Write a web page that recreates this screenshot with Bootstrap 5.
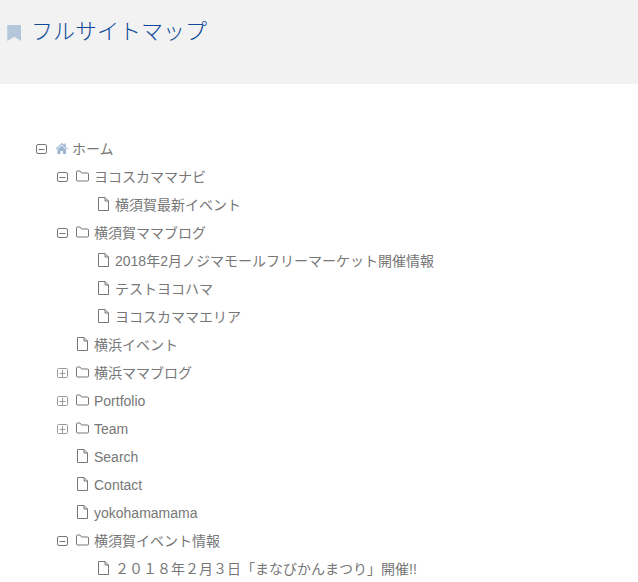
<!DOCTYPE html>
<html lang="ja">

<head>
    <meta charset="UTF-8">
    <title>フルサイトマップ</title>
    <link href="https://cdn.jsdelivr.net/npm/bootstrap@5.3.3/dist/css/bootstrap.min.css" rel="stylesheet">
    <style>
        body {
            font-family: "Liberation Sans", "Noto Sans CJK JP", sans-serif;
            font-size: 14px;
            color: #777;
            background: #fff;
        }

        .page-head {
            background: #f2f2f2;
            height: 84px;
            padding: 19px 0 0 7px;
        }

        .page-head h1 {
            font-family: "Liberation Sans", "Noto Sans CJK JP", sans-serif;
            font-size: 22px;
            font-weight: 300;
            line-height: 26px;
            color: #0e4a98;
            margin: 0;
        }

        .page-head svg {
            margin: 6px 10px 0 0;
        }

        .site-tree {
            padding: 50px 0 0 35px;
        }

        .site-tree ul {
            list-style: none;
            margin: 0;
            padding: 0 0 0 21px;
        }

        .site-tree > ul {
            padding-left: 0;
        }

        .tree-row {
            height: 28px;
            white-space: nowrap;
        }

        .tree-row a {
            color: #777;
            text-decoration: none;
            padding-top: 2px;
        }

        .tree-toggle {
            width: 12px;
            height: 12px;
            flex: none;
            margin-right: 8px;
            color: #777;
        }

        .tree-toggle.is-closed {
            color: #979c97;
        }

        .tree-gap {
            width: 20px;
            flex: none;
        }

        .tree-icon {
            width: 14px;
            height: 14px;
            flex: none;
            margin-right: 4px;
            color: #777;
        }
    </style>
</head>

<body>
    <svg width="0" height="0" class="d-block">
        <symbol id="i-minus" viewBox="0 0 12 12">
            <rect x="1.500" y="2.500" width="10" height="9" rx="1.500" fill="none" stroke="currentColor" />
            <path d="M3.500 7.500h6" stroke="currentColor" />
        </symbol>
        <symbol id="i-plus" viewBox="0 0 12 12">
            <rect x="1.500" y="2.500" width="10" height="9" rx="1" fill="none" stroke="currentColor" />
            <path d="M3.500 7.500h6M6.500 4v7" stroke="currentColor" />
        </symbol>
        <symbol id="i-folder" viewBox="0 0 14 14">
            <path d="M.5 11V3q0-1 1-1h2.500l1.500 2h6q1 0 1 1v6q0 1-1 1H1.500q-1 0-1-1z" fill="none" stroke="currentColor" />
        </symbol>
        <symbol id="i-file" viewBox="0 0 14 14">
            <path d="M1.500 .5H8l3.500 3.500v9.500h-10zM8 .5V4h3.500" fill="none" stroke="currentColor" />
        </symbol>
    </svg>

    <header class="page-head d-flex align-items-start">
        <svg width="14" height="16" viewBox="0 0 14 16">
            <path d="M.3 0H14v16l-6.800-4.200L.3 16z" fill="#b3c6da" />
        </svg>
        <h1>フルサイトマップ</h1>
    </header>

    <nav class="site-tree">
        <ul>
            <li>
                <div class="tree-row d-flex align-items-center">
                    <svg class="tree-toggle"><use href="#i-minus" /></svg>
                    <svg class="me-1" width="13" height="12" viewBox="0 0 13 12">
                        <path d="M6.700 1 .5 6.800l.8.8 5.400-5 5.400 5 .8-.8-2.200-2.100V1.500H9.300v1.200zM2.400 7.600V12h3V9h2.600v3h3V7.600L6.700 3.600z" fill="#9db5d0" />
                    </svg>
                    <a href="#">ホーム</a>
                </div>
                <ul>
                    <li>
                        <div class="tree-row d-flex align-items-center">
                            <svg class="tree-toggle"><use href="#i-minus" /></svg>
                            <svg class="tree-icon"><use href="#i-folder" /></svg>
                            <a href="#">ヨコスカママナビ</a>
                        </div>
                        <ul>
                            <li>
                                <div class="tree-row d-flex align-items-center">
                                    <span class="tree-gap"></span>
                                    <svg class="tree-icon"><use href="#i-file" /></svg>
                                    <a href="#">横須賀最新イベント</a>
                                </div>
                            </li>
                        </ul>
                    </li>
                    <li>
                        <div class="tree-row d-flex align-items-center">
                            <svg class="tree-toggle"><use href="#i-minus" /></svg>
                            <svg class="tree-icon"><use href="#i-folder" /></svg>
                            <a href="#">横須賀ママブログ</a>
                        </div>
                        <ul>
                            <li>
                                <div class="tree-row d-flex align-items-center">
                                    <span class="tree-gap"></span>
                                    <svg class="tree-icon"><use href="#i-file" /></svg>
                                    <a href="#">2018年2月ノジマモールフリーマーケット開催情報</a>
                                </div>
                            </li>
                            <li>
                                <div class="tree-row d-flex align-items-center">
                                    <span class="tree-gap"></span>
                                    <svg class="tree-icon"><use href="#i-file" /></svg>
                                    <a href="#">テストヨコハマ</a>
                                </div>
                            </li>
                            <li>
                                <div class="tree-row d-flex align-items-center">
                                    <span class="tree-gap"></span>
                                    <svg class="tree-icon"><use href="#i-file" /></svg>
                                    <a href="#">ヨコスカママエリア</a>
                                </div>
                            </li>
                        </ul>
                    </li>
                    <li>
                        <div class="tree-row d-flex align-items-center">
                            <span class="tree-gap"></span>
                            <svg class="tree-icon"><use href="#i-file" /></svg>
                            <a href="#">横浜イベント</a>
                        </div>
                    </li>
                    <li>
                        <div class="tree-row d-flex align-items-center">
                            <svg class="tree-toggle is-closed"><use href="#i-plus" /></svg>
                            <svg class="tree-icon"><use href="#i-folder" /></svg>
                            <a href="#">横浜ママブログ</a>
                        </div>
                    </li>
                    <li>
                        <div class="tree-row d-flex align-items-center">
                            <svg class="tree-toggle is-closed"><use href="#i-plus" /></svg>
                            <svg class="tree-icon"><use href="#i-folder" /></svg>
                            <a href="#">Portfolio</a>
                        </div>
                    </li>
                    <li>
                        <div class="tree-row d-flex align-items-center">
                            <svg class="tree-toggle is-closed"><use href="#i-plus" /></svg>
                            <svg class="tree-icon"><use href="#i-folder" /></svg>
                            <a href="#">Team</a>
                        </div>
                    </li>
                    <li>
                        <div class="tree-row d-flex align-items-center">
                            <span class="tree-gap"></span>
                            <svg class="tree-icon"><use href="#i-file" /></svg>
                            <a href="#">Search</a>
                        </div>
                    </li>
                    <li>
                        <div class="tree-row d-flex align-items-center">
                            <span class="tree-gap"></span>
                            <svg class="tree-icon"><use href="#i-file" /></svg>
                            <a href="#">Contact</a>
                        </div>
                    </li>
                    <li>
                        <div class="tree-row d-flex align-items-center">
                            <span class="tree-gap"></span>
                            <svg class="tree-icon"><use href="#i-file" /></svg>
                            <a href="#">yokohamamama</a>
                        </div>
                    </li>
                    <li>
                        <div class="tree-row d-flex align-items-center">
                            <svg class="tree-toggle"><use href="#i-minus" /></svg>
                            <svg class="tree-icon"><use href="#i-folder" /></svg>
                            <a href="#">横須賀イベント情報</a>
                        </div>
                        <ul>
                            <li>
                                <div class="tree-row d-flex align-items-center">
                                    <span class="tree-gap"></span>
                                    <svg class="tree-icon"><use href="#i-file" /></svg>
                                    <a href="#">２０１８年２月３日「まなびかんまつり」開催!!</a>
                                </div>
                            </li>
                        </ul>
                    </li>
                </ul>
            </li>
        </ul>
    </nav>

    <script src="https://cdn.jsdelivr.net/npm/bootstrap@5.3.3/dist/js/bootstrap.bundle.min.js"></script>
</body>

</html>
